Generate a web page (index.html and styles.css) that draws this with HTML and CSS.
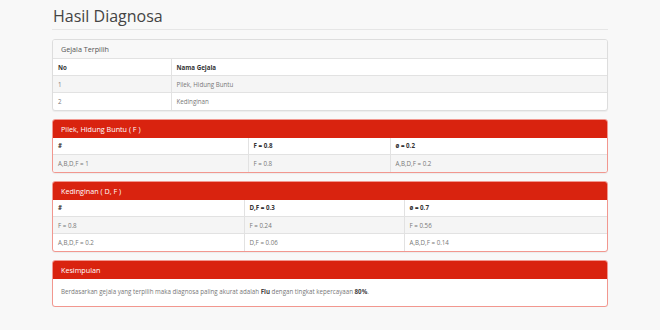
FILE: index.html
```html
<!DOCTYPE html>
<html lang="id">
<head>
    <meta charset="UTF-8">
    <meta name="viewport" content="width=device-width, initial-scale=1.0">
    <title>Hasil Diagnosa</title>
    <link rel="stylesheet" href="styles.css">
</head>
<body>
    <div class="container">
        <h1 class="page-title">Hasil Diagnosa</h1>

        <div class="panel">
            <div class="panel-heading">Gejala Terpilih</div>
            <table class="table">
                <tr>
                    <th class="w-no">No</th>
                    <th>Nama Gejala</th>
                </tr>
                <tr>
                    <td>1</td>
                    <td>Pilek, Hidung Buntu</td>
                </tr>
                <tr>
                    <td>2</td>
                    <td>Kedinginan</td>
                </tr>
            </table>
        </div>

        <div class="panel panel-danger">
            <div class="panel-heading">Pilek, Hidung Buntu ( F )</div>
            <table class="table">
                <tr>
                    <th class="w-a1">#</th>
                    <th class="w-a2">F = 0.8</th>
                    <th>ø = 0.2</th>
                </tr>
                <tr>
                    <td>A,B,D,F = 1</td>
                    <td>F = 0.8</td>
                    <td>A,B,D,F = 0.2</td>
                </tr>
            </table>
        </div>

        <div class="panel panel-danger">
            <div class="panel-heading">Kedinginan ( D, F )</div>
            <table class="table">
                <tr>
                    <th class="w-b1">#</th>
                    <th class="w-b2">D,F = 0.3</th>
                    <th>ø = 0.7</th>
                </tr>
                <tr>
                    <td>F = 0.8</td>
                    <td>F = 0.24</td>
                    <td>F = 0.56</td>
                </tr>
                <tr>
                    <td>A,B,D,F = 0.2</td>
                    <td>D,F = 0.06</td>
                    <td>A,B,D,F = 0.14</td>
                </tr>
            </table>
        </div>

        <div class="panel panel-danger">
            <div class="panel-heading">Kesimpulan</div>
            <div class="panel-body">
                Berdasarkan gejala yang terpilih maka diagnosa paling akurat adalah <b>Flu</b> dengan tingkat kepercayaan <b>80%</b>.
            </div>
        </div>
    </div>
</body>
</html>
```

FILE: styles.css
```css
* {
    padding: 0;
    margin: 0;
    box-sizing: border-box;
}
body {
    background-color: #f8f8f8;
    font-family: "Open Sans", "Liberation Sans", sans-serif;
    color: #777;
    font-size: 6.2px;
}
.container {
    width: 556px;
    margin: 0 auto;
}
.page-title {
    margin-top: 7px;
    padding: 0 1px 4px;
    font-size: 16px;
    line-height: 18px;
    font-weight: 400;
    color: #444;
    border-bottom: 1px solid #e6e6e6;
}
.panel {
    margin-top: 9px;
    background-color: #fff;
    border: 1px solid #ddd;
    border-radius: 3px;
    overflow: hidden;
    box-shadow: 0 1px 1px rgba(0,0,0,0.05);
}
.panel + .panel {
    margin-top: 8px;
}
.panel-heading {
    height: 18px;
    padding: 0 8px;
    line-height: 18px;
    font-size: 7.2px;
    color: #555;
    background-color: #f8f8f8;
}
.panel-danger {
    border-color: #f2978f;
}
.panel-danger .panel-heading {
    background-color: #d9230f;
    color: #fff;
}
.table {
    width: 100%;
    border-collapse: collapse;
}
.table th,
.table td {
    height: 17px;
    padding: 0 5px;
    text-align: left;
    border-top: 1px solid #e2e2e2;
    border-left: 1px solid #e2e2e2;
}
.table th:first-child,
.table td:first-child {
    border-left: 0;
}
.table th {
    font-weight: 700;
    color: #333;
}
.table tr:nth-child(2n) td {
    background-color: #f5f5f5;
}
.panel-danger .table tr:first-child th {
    border-top: 0;
}
.w-no { width: 118px; }
.w-a1 { width: 195px; }
.w-a2 { width: 142px; }
.w-b1 { width: 191px; }
.w-b2 { width: 160px; }
.panel-body {
    padding: 8px 8px 9px;
    line-height: 10px;
}
.panel-body b {
    color: #444;
}
```
